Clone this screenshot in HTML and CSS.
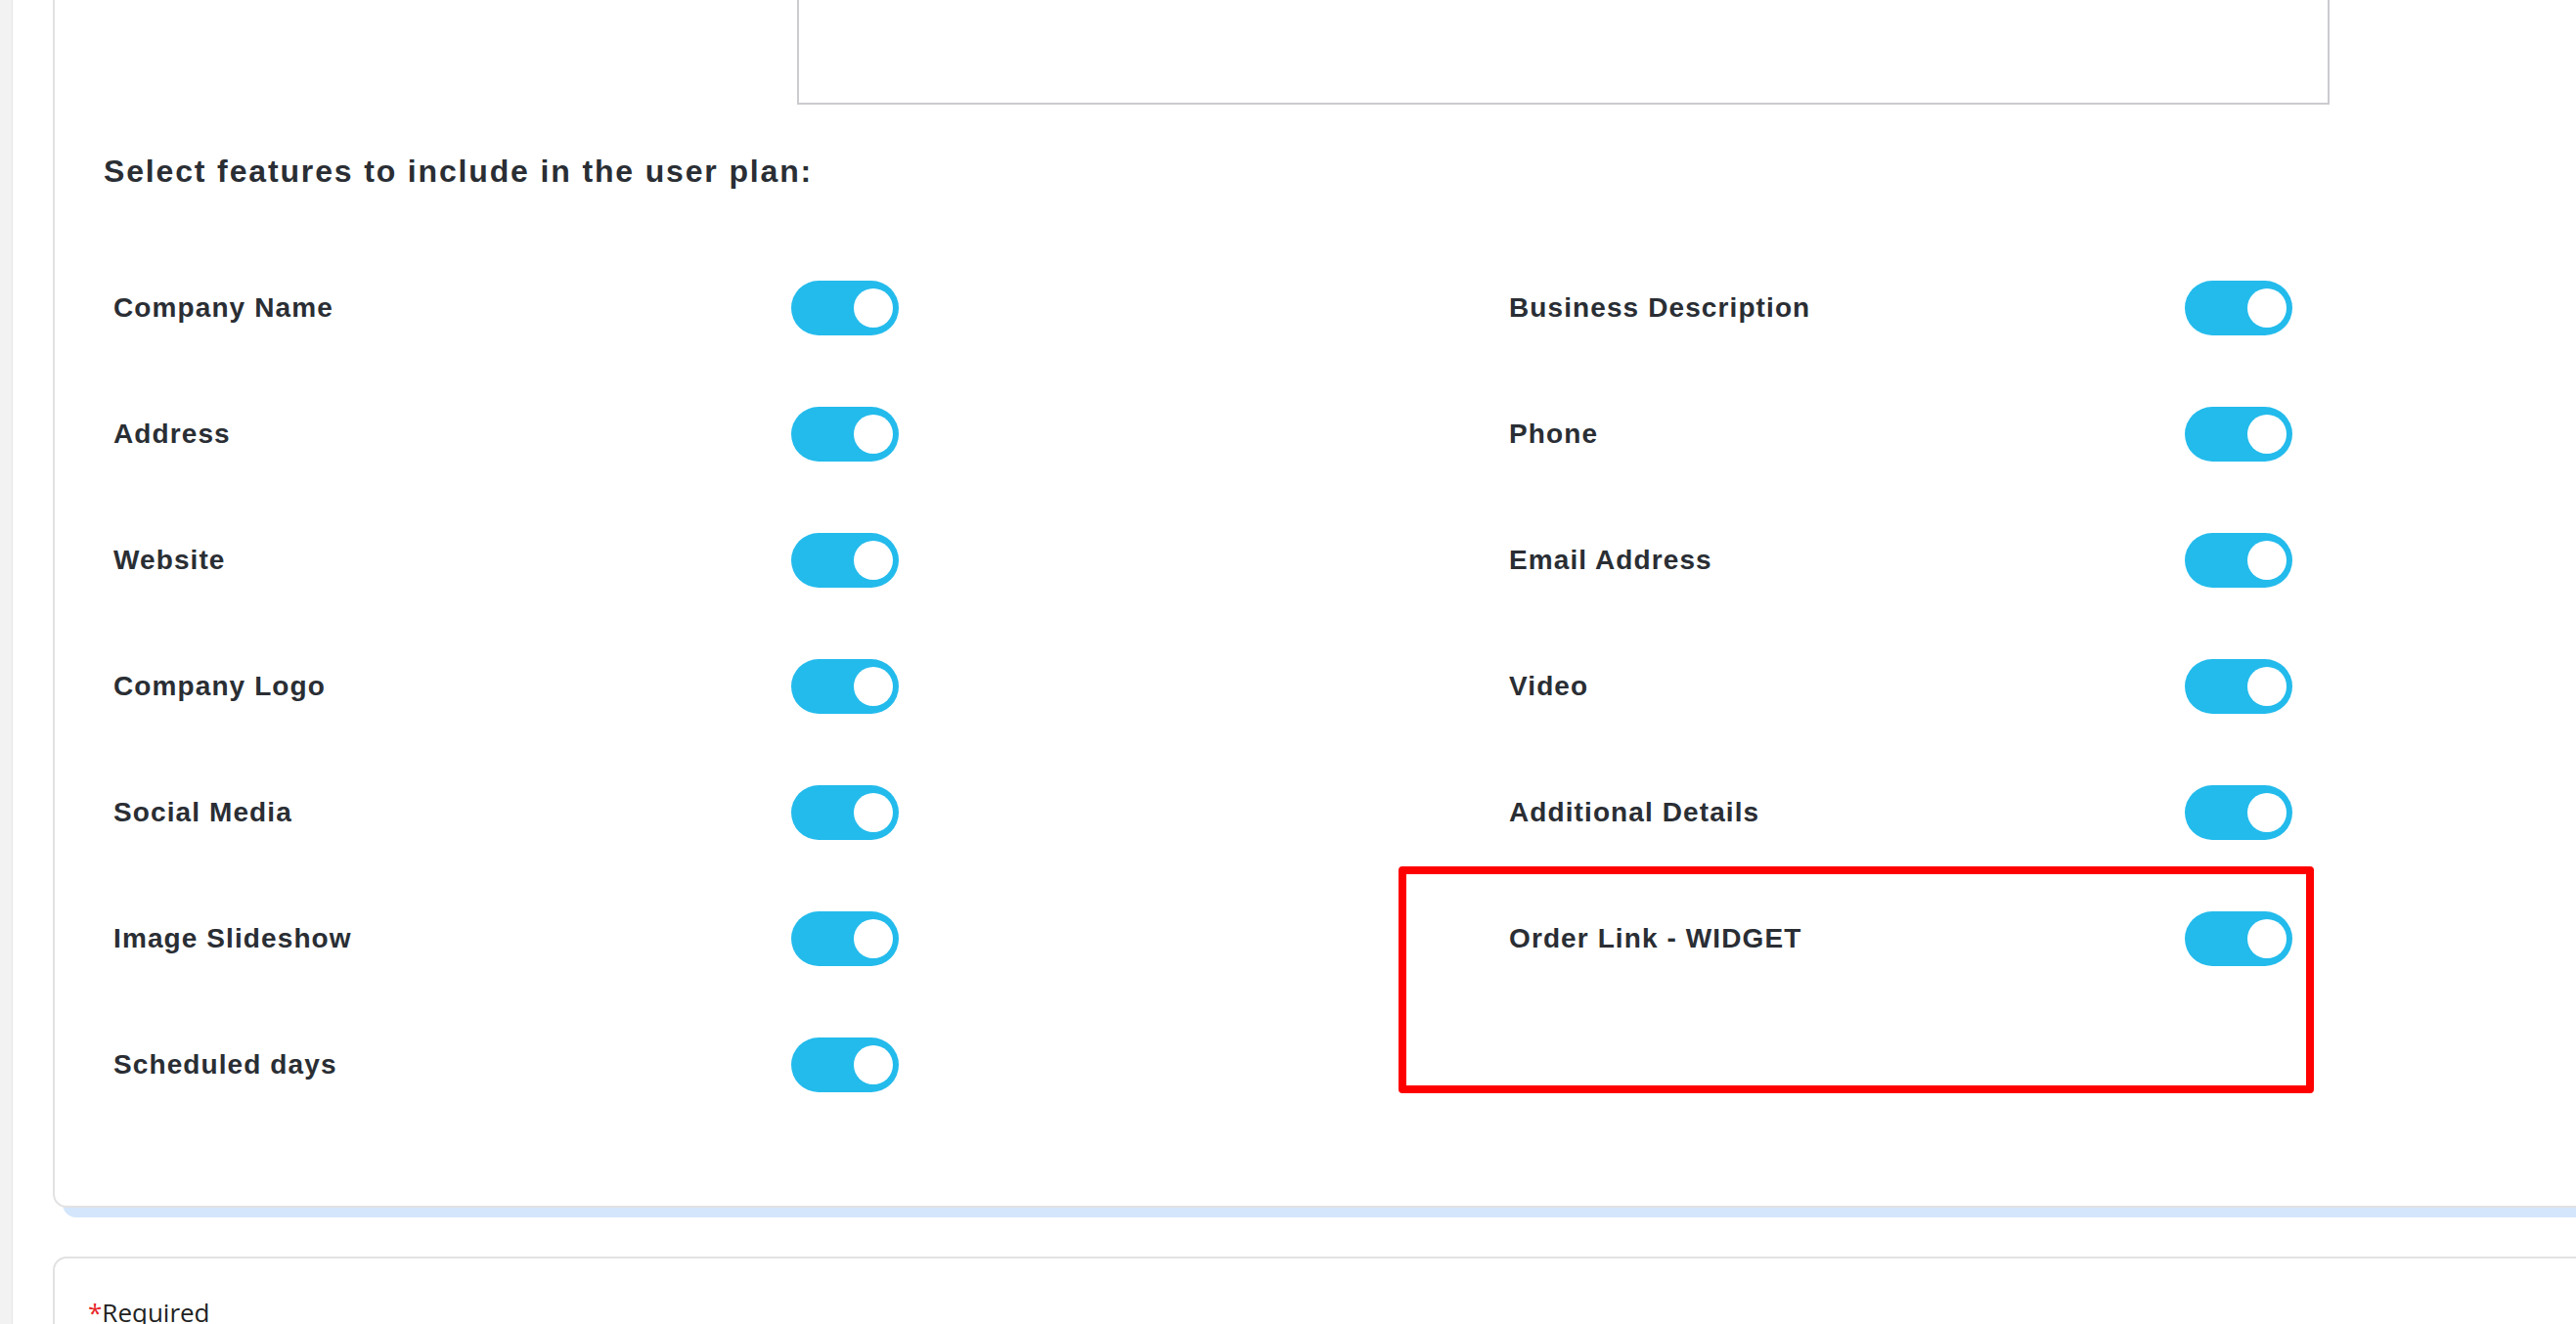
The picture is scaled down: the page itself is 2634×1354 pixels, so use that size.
FILE: index.html
```html
<!DOCTYPE html>
<html lang="en">
<head>
    <meta charset="UTF-8">
    <meta name="viewport" content="width=device-width, initial-scale=1.0">
    <title>User plan features</title>

    <link rel="stylesheet" href="styles.css">
</head>
<body>
    <div class="layout">
        <div class="sidebar"></div>
        <div class="content">
            <div class="card">
                <div class="field">
                    <textarea class="textBox" readonly></textarea>
                </div>

                <h2 class="sectionTitle">Select features to include in the user plan:</h2>

                <div class="features">
                    <div class="feature">
                        <span class="featureName">Company Name</span>
                        <label class="switch"><input type="checkbox" checked><span class="slider"></span></label>
                    </div>
                    <div class="feature">
                        <span class="featureName">Business Description</span>
                        <label class="switch"><input type="checkbox" checked><span class="slider"></span></label>
                    </div>
                    <div class="feature">
                        <span class="featureName">Address</span>
                        <label class="switch"><input type="checkbox" checked><span class="slider"></span></label>
                    </div>
                    <div class="feature">
                        <span class="featureName">Phone</span>
                        <label class="switch"><input type="checkbox" checked><span class="slider"></span></label>
                    </div>
                    <div class="feature">
                        <span class="featureName">Website</span>
                        <label class="switch"><input type="checkbox" checked><span class="slider"></span></label>
                    </div>
                    <div class="feature">
                        <span class="featureName">Email Address</span>
                        <label class="switch"><input type="checkbox" checked><span class="slider"></span></label>
                    </div>
                    <div class="feature">
                        <span class="featureName">Company Logo</span>
                        <label class="switch"><input type="checkbox" checked><span class="slider"></span></label>
                    </div>
                    <div class="feature">
                        <span class="featureName">Video</span>
                        <label class="switch"><input type="checkbox" checked><span class="slider"></span></label>
                    </div>
                    <div class="feature">
                        <span class="featureName">Social Media</span>
                        <label class="switch"><input type="checkbox" checked><span class="slider"></span></label>
                    </div>
                    <div class="feature">
                        <span class="featureName">Additional Details</span>
                        <label class="switch"><input type="checkbox" checked><span class="slider"></span></label>
                    </div>
                    <div class="feature">
                        <span class="featureName">Image Slideshow</span>
                        <label class="switch"><input type="checkbox" checked><span class="slider"></span></label>
                    </div>
                    <div class="feature highlighted">
                        <span class="featureName">Order Link - WIDGET</span>
                        <label class="switch"><input type="checkbox" checked><span class="slider"></span></label>
                        <div class="redMark"></div>
                    </div>
                    <div class="feature">
                        <span class="featureName">Scheduled days</span>
                        <label class="switch"><input type="checkbox" checked><span class="slider"></span></label>
                    </div>
                </div>
            </div>

            <div class="card footerCard">
                <p class="required"><span class="star">*</span>Required</p>
            </div>
        </div>
    </div>
</body>
</html>
```

FILE: styles.css
```css
html, body{
    margin: 0;
    height: 100%;
    background-color: white;
    overflow: hidden;
    font-family: "Liberation Sans", Arial, sans-serif;
    color: #2a2e34;
}

.layout{
    display: flex;
    min-height: 100%;
}

.sidebar{
    flex: 0 0 12px;
    background-color: #f2f2f2;
    border-right: 1px solid #e6e6e6;
}

.content{
    flex: 1;
    padding-left: 41px;
    margin-right: -120px;
}

.card{
    background-color: white;
    border: 2px solid #e2e2e2;
    border-radius: 14px;
    box-shadow: 10px 10px 0 #d3e6fb;
    margin-top: -120px;
    padding: 40px 0 116px 50px;
}

.textBox{
    display: block;
    box-sizing: border-box;
    margin-left: 709px;
    width: 1567px;
    height: 185px;
    border: 2px solid #cbcbd0;
    resize: none;
    outline: none;
}

.sectionTitle{
    margin: 49px 0 0 0;
    font-size: 32px;
    line-height: 38px;
    font-weight: bold;
    letter-spacing: 1.85px;
}

.features{
    display: grid;
    grid-template-columns: 1427px 1fr;
    row-gap: 73px;
    margin-top: 93px;
}

.feature{
    position: relative;
    display: flex;
    align-items: center;
    padding-left: 10px;
    height: 56px;
}

.featureName{
    flex: 0 0 693px;
    font-size: 28px;
    font-weight: bold;
    letter-spacing: 1.1px;
}

.feature:nth-child(even) .featureName{
    flex-basis: 691px;
}

.switch{
    position: relative;
    display: inline-block;
    width: 110px;
    height: 56px;
}

.switch input{
    opacity: 0;
    width: 0;
    height: 0;
}

.slider{
    position: absolute;
    top: 0;
    left: 0;
    right: 0;
    bottom: 0;
    background-color: #23bbec;
    border-radius: 28px;
}

.slider::before{
    content: "";
    position: absolute;
    top: 8px;
    right: 6px;
    width: 40px;
    height: 40px;
    border-radius: 50%;
    background-color: white;
}

.redMark{
    position: absolute;
    top: -46px;
    left: -103px;
    width: 936px;
    height: 232px;
    box-sizing: border-box;
    border: 8px solid #ff0000;
    border-radius: 4px;
}

.footerCard{
    margin-top: 50px;
    box-shadow: none;
    padding: 37px 0 40px 34px;
}

.required{
    margin: 0;
    font-family: "Open Sans", sans-serif;
    font-size: 26px;
    color: #222;
}

.star{
    color: #e8262a;
}
```
